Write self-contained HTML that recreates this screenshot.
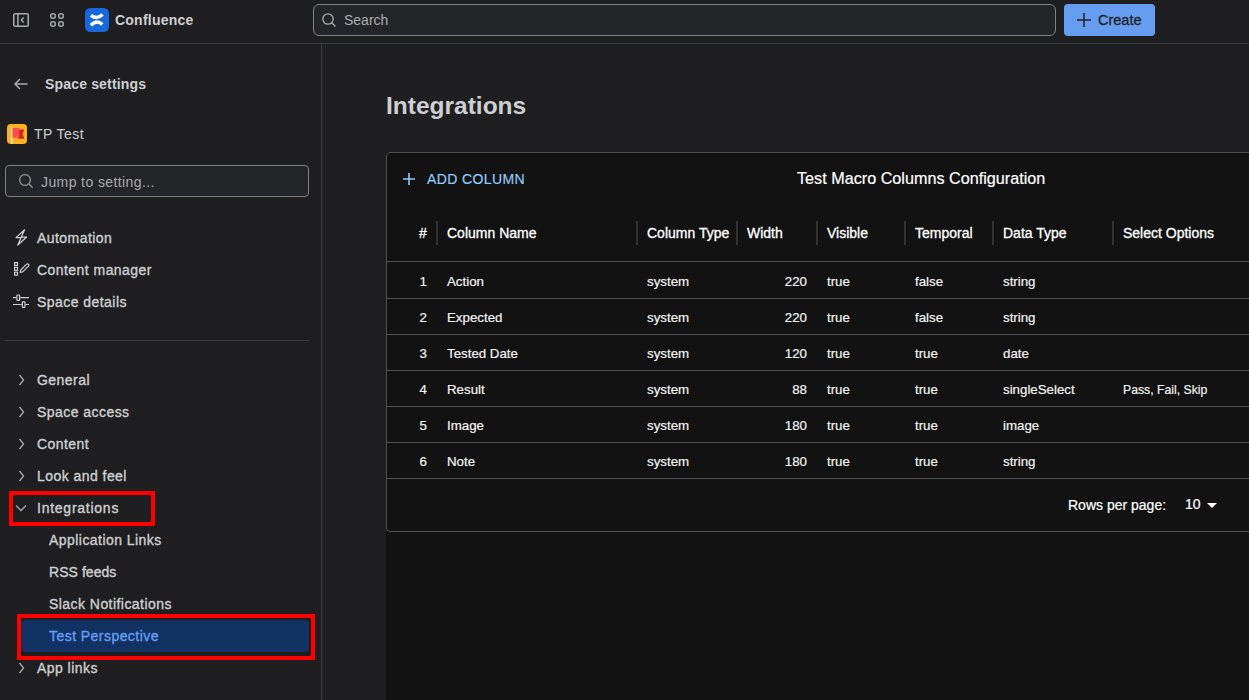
<!DOCTYPE html>
<html><head><meta charset="utf-8">
<style>
*{box-sizing:border-box;margin:0;padding:0}
html,body{width:1249px;height:700px;overflow:hidden;background:#1f1f21;font-family:"Liberation Sans",sans-serif;color:#cecfd2}
.abs{position:absolute}
.t{position:absolute;white-space:nowrap;line-height:1}
#top{position:absolute;left:0;top:0;width:1249px;height:44px;border-bottom:1px solid #3b3c3f;background:#1f1f21}
#side{position:absolute;left:0;top:44px;width:322px;height:656px;border-right:1px solid #3b3c3f;background:#1f1f21}
.navi{font-size:14px;color:#cecfd2;letter-spacing:0.45px;-webkit-text-stroke:0.35px #cecfd2}
.sub{font-size:14px;color:#cecfd2;letter-spacing:0.45px;-webkit-text-stroke:0.35px #cecfd2}
#frame{position:absolute;left:386px;top:152px;width:863px;height:548px;background:#121212}
#card{position:absolute;left:0;top:0;width:900px;height:380px;border:1px solid #515151;border-radius:4px;background:#121212}
.hd{position:absolute;top:226px;font-size:14px;color:#fff;-webkit-text-stroke:0.3px #fff;white-space:nowrap;line-height:1}
.sep{position:absolute;top:221px;width:2px;height:24px;background:#333}
.hl{position:absolute;left:387px;width:862px;height:1px;background:#515151}
.c{position:absolute;font-size:13.3px;color:#f2f2f2;-webkit-text-stroke:0.2px #f2f2f2;white-space:nowrap;line-height:1}
</style></head><body>
<div id="top">
  <!-- sidebar toggle icon -->
  <svg class="abs" style="left:13px;top:13px" width="16" height="14" viewBox="0 0 16 14"><rect x="0.75" y="0.75" width="14.5" height="12.5" rx="1.5" fill="none" stroke="#a9abaf" stroke-width="1.5"/><line x1="4.9" y1="1" x2="4.9" y2="13" stroke="#a9abaf" stroke-width="1.5"/><path d="M10.6 4.5 L8.4 7 L10.6 9.5" fill="none" stroke="#a9abaf" stroke-width="1.5"/></svg>
  <!-- app grid -->
  <svg class="abs" style="left:50px;top:13px" width="14" height="14" viewBox="0 0 14 14"><g fill="none" stroke="#a9abaf" stroke-width="1.5"><rect x="0.75" y="0.75" width="4.5" height="4.5" rx="2"/><rect x="8.75" y="0.75" width="4.5" height="4.5" rx="2"/><rect x="0.75" y="8.75" width="4.5" height="4.5" rx="2"/><rect x="8.75" y="8.75" width="4.5" height="4.5" rx="2"/></g></svg>
  <!-- confluence logo -->
  <svg class="abs" style="left:85px;top:8px" width="24" height="24" viewBox="0 0 24 24"><rect width="24" height="24" rx="5.5" fill="#1868db"/><path d="M6 7.4 Q12 12 17.6 6.6" fill="none" stroke="#fff" stroke-width="3.5"/><path d="M5.9 17.2 Q12 11.2 17.3 16.5" fill="none" stroke="#fff" stroke-width="3.5"/></svg>
  <div class="t" style="left:115px;top:13px;font-size:14px;letter-spacing:0.23px;font-weight:bold;color:#cecfd2">Confluence</div>
  <!-- search -->
  <div class="abs" style="left:313px;top:4px;width:743px;height:32px;border:1px solid #7e8188;border-radius:6px;background:#242528"></div>
  <svg class="abs" style="left:321px;top:12px" width="16" height="16" viewBox="0 0 16 16"><circle cx="7" cy="7" r="5.2" fill="none" stroke="#a9abaf" stroke-width="1.3"/><line x1="10.8" y1="10.8" x2="14.4" y2="14.4" stroke="#a9abaf" stroke-width="1.4"/></svg>
  <div class="t" style="left:344px;top:13px;font-size:14px;color:#a9abaf">Search</div>
  <!-- create -->
  <div class="abs" style="left:1064px;top:4px;width:91px;height:32px;border-radius:4px;background:#669df1"></div>
  <svg class="abs" style="left:1077px;top:13px" width="14" height="14" viewBox="0 0 14 14"><path d="M7 0 V14 M0 7 H14" stroke="#1f1f21" stroke-width="1.5"/></svg>
  <div class="t" style="left:1098px;top:13px;font-size:14.5px;color:#1f1f21;-webkit-text-stroke:0.3px #1f1f21">Create</div>
</div>

<div id="side">
  <svg class="abs" style="left:14px;top:34px" width="14" height="12" viewBox="0 0 14 12"><path d="M13.5 6 H1 M6 1 L1 6 L6 11" fill="none" stroke="#a9abaf" stroke-width="1.5"/></svg>
  <div class="t" style="left:45px;top:33px;font-size:14px;letter-spacing:0.17px;font-weight:bold;color:#cecfd2">Space settings</div>
  <!-- space avatar -->
  <svg class="abs" style="left:7px;top:80px" width="20" height="20" viewBox="0 0 20 20"><rect width="20" height="20" rx="4" fill="#ffb41f"/><rect x="4.1" y="3" width="1.3" height="16.7" fill="#e6ecef"/><path d="M10.8 5.4 H17.4 L15.6 10.1 L17.4 14.8 H10.8 Z" fill="#d92323"/><rect x="5.5" y="4" width="6.7" height="9.7" fill="#ff4d4a"/></svg>
  <div class="t" style="left:34px;top:83px;font-size:14px;letter-spacing:0.45px;color:#cecfd2">TP Test</div>
  <!-- jump input -->
  <div class="abs" style="left:5px;top:121px;width:304px;height:32px;border:1px solid #7e8188;border-radius:4px;background:#242528"></div>
  <svg class="abs" style="left:18px;top:129px" width="16" height="16" viewBox="0 0 16 16"><circle cx="7" cy="7" r="5.4" fill="none" stroke="#9a9ca1" stroke-width="1.25"/><line x1="11" y1="11" x2="14.6" y2="14.6" stroke="#9a9ca1" stroke-width="1.3"/></svg>
  <div class="t" style="left:41px;top:131px;font-size:14px;letter-spacing:0.4px;color:#a9abaf">Jump to setting...</div>

  <!-- automation -->
  <svg class="abs" style="left:15px;top:185px" width="13" height="17" viewBox="0 0 13 17"><path d="M9.6 0.8 L1 8.6 H6.2 L2.8 16 L11.6 8 H6.3 Z" fill="none" stroke="#cecfd2" stroke-width="1.25" stroke-linejoin="round"/></svg>
  <div class="t navi" style="left:37px;top:187px">Automation</div>
  <svg class="abs" style="left:13px;top:217px" width="17" height="16" viewBox="0 0 17 16"><g fill="none" stroke="#cecfd2" stroke-width="1.2"><rect x="1.6" y="1.6" width="2.9" height="2.9"/><rect x="1.6" y="6.4" width="2.9" height="2.9"/><rect x="1.6" y="11.2" width="2.9" height="2.9"/><path d="M7.2 11.5 L7.8 9 L13.6 3.2 Q14.4 2.4 15.2 3.2 L15.5 3.5 Q16.3 4.3 15.5 5.1 L9.7 10.9 Z" stroke-linejoin="round"/></g></svg>
  <div class="t navi" style="left:37px;top:219px">Content manager</div>
  <svg class="abs" style="left:13px;top:250px" width="16" height="14" viewBox="0 0 16 14"><g fill="none" stroke="#cecfd2" stroke-width="1.2"><path d="M0 3.7 H3.3 M7.2 3.7 H16 M0 10.5 H8.7 M12.6 10.5 H16"/><rect x="3.9" y="1" width="2.7" height="5.4" rx="0.6"/><rect x="9.3" y="7.9" width="2.7" height="5.4" rx="0.6"/></g></svg>
  <div class="t navi" style="left:37px;top:251px">Space details</div>

  <div class="abs" style="left:5px;top:296px;width:304px;height:1px;background:#3b3c3f"></div>

  <!-- chevrons -->
  <svg class="abs" style="left:18px;top:330px" width="8" height="12" viewBox="0 0 8 12"><path d="M1.5 1 L5.6 6 L1.5 11" fill="none" stroke="#a9abaf" stroke-width="1.3"/></svg>
  <div class="t navi" style="left:37px;top:329px">General</div>
  <svg class="abs" style="left:18px;top:362px" width="8" height="12" viewBox="0 0 8 12"><path d="M1.5 1 L5.6 6 L1.5 11" fill="none" stroke="#a9abaf" stroke-width="1.3"/></svg>
  <div class="t navi" style="left:37px;top:361px">Space access</div>
  <svg class="abs" style="left:18px;top:394px" width="8" height="12" viewBox="0 0 8 12"><path d="M1.5 1 L5.6 6 L1.5 11" fill="none" stroke="#a9abaf" stroke-width="1.3"/></svg>
  <div class="t navi" style="left:37px;top:393px">Content</div>
  <svg class="abs" style="left:18px;top:426px" width="8" height="12" viewBox="0 0 8 12"><path d="M1.5 1 L5.6 6 L1.5 11" fill="none" stroke="#a9abaf" stroke-width="1.3"/></svg>
  <div class="t navi" style="left:37px;top:425px">Look and feel</div>
  <svg class="abs" style="left:15px;top:460px" width="12" height="8" viewBox="0 0 12 8"><path d="M1 1.5 L6 6.5 L11 1.5" fill="none" stroke="#a9abaf" stroke-width="1.3"/></svg>
  <div class="t navi" style="left:37px;top:457px;letter-spacing:0.75px">Integrations</div>
  <div class="t sub" style="left:49px;top:489px">Application Links</div>
  <div class="t sub" style="left:49px;top:521px;letter-spacing:0.05px">RSS feeds</div>
  <div class="t sub" style="left:49px;top:553px">Slack Notifications</div>
  <div class="abs" style="left:21px;top:576px;width:288px;height:32px;border-radius:4px;background:#123263"></div>
  <div class="t sub" style="left:49px;top:585px;color:#669df1;-webkit-text-stroke-color:#669df1">Test Perspective</div>
  <svg class="abs" style="left:18px;top:618px" width="8" height="12" viewBox="0 0 8 12"><path d="M1.5 1 L5.6 6 L1.5 11" fill="none" stroke="#a9abaf" stroke-width="1.3"/></svg>
  <div class="t navi" style="left:37px;top:617px">App links</div>

  <!-- red boxes -->
  <div class="abs" style="left:9px;top:447px;width:146px;height:35px;border:4px solid #ff0000"></div>
  <div class="abs" style="left:17px;top:570px;width:298px;height:46px;border:4px solid #ff0000"></div>
</div>

<div class="t" style="left:386px;top:94px;font-size:24.5px;font-weight:bold;color:#cecfd2">Integrations</div>

<div id="frame">
  <div id="card"></div>
</div>
<!-- toolbar -->
<svg class="abs" style="left:403px;top:173px" width="12" height="12" viewBox="0 0 12 12"><path d="M6 0 V12 M0 6 H12" stroke="#90caf9" stroke-width="1.6"/></svg>
<div class="t" style="left:427px;top:172px;font-size:14px;color:#90caf9;letter-spacing:0.4px;-webkit-text-stroke:0.2px #90caf9">ADD COLUMN</div>
<div class="t" style="left:797px;top:170px;font-size:16.2px;color:#fff;-webkit-text-stroke:0.2px #fff">Test Macro Columns Configuration</div>

<!-- header -->
<div class="hd" style="left:419px">#</div>
<div class="sep" style="left:436px"></div>
<div class="hd" style="left:447px">Column Name</div>
<div class="sep" style="left:636px"></div>
<div class="hd" style="left:647px">Column Type</div>
<div class="sep" style="left:736px"></div>
<div class="hd" style="left:747px">Width</div>
<div class="sep" style="left:816px"></div>
<div class="hd" style="left:827px">Visible</div>
<div class="sep" style="left:904px"></div>
<div class="hd" style="left:915px">Temporal</div>
<div class="sep" style="left:992px"></div>
<div class="hd" style="left:1003px">Data Type</div>
<div class="sep" style="left:1112px"></div>
<div class="hd" style="left:1123px">Select Options</div>

<div class="hl" style="top:261px"></div>
<div class="hl" style="top:298px"></div>
<div class="hl" style="top:334px"></div>
<div class="hl" style="top:370px"></div>
<div class="hl" style="top:406px"></div>
<div class="hl" style="top:442px"></div>
<div class="hl" style="top:478px"></div>

<div id="rows">
<div class="c" style="right:822px;top:275px">1</div>
<div class="c" style="left:447px;top:275px">Action</div>
<div class="c" style="left:647px;top:275px">system</div>
<div class="c" style="right:442px;top:275px">220</div>
<div class="c" style="left:827px;top:275px">true</div>
<div class="c" style="left:915px;top:275px">false</div>
<div class="c" style="left:1003px;top:275px">string</div>
<div class="c" style="right:822px;top:311px">2</div>
<div class="c" style="left:447px;top:311px">Expected</div>
<div class="c" style="left:647px;top:311px">system</div>
<div class="c" style="right:442px;top:311px">220</div>
<div class="c" style="left:827px;top:311px">true</div>
<div class="c" style="left:915px;top:311px">false</div>
<div class="c" style="left:1003px;top:311px">string</div>
<div class="c" style="right:822px;top:347px">3</div>
<div class="c" style="left:447px;top:347px">Tested Date</div>
<div class="c" style="left:647px;top:347px">system</div>
<div class="c" style="right:442px;top:347px">120</div>
<div class="c" style="left:827px;top:347px">true</div>
<div class="c" style="left:915px;top:347px">true</div>
<div class="c" style="left:1003px;top:347px">date</div>
<div class="c" style="right:822px;top:383px">4</div>
<div class="c" style="left:447px;top:383px">Result</div>
<div class="c" style="left:647px;top:383px">system</div>
<div class="c" style="right:442px;top:383px">88</div>
<div class="c" style="left:827px;top:383px">true</div>
<div class="c" style="left:915px;top:383px">true</div>
<div class="c" style="left:1003px;top:383px">singleSelect</div>
<div class="c" style="left:1123px;top:383px"><span style="display:inline-block;transform:scaleX(0.92);transform-origin:0 0">Pass, Fail, Skip</span></div>
<div class="c" style="right:822px;top:419px">5</div>
<div class="c" style="left:447px;top:419px">Image</div>
<div class="c" style="left:647px;top:419px">system</div>
<div class="c" style="right:442px;top:419px">180</div>
<div class="c" style="left:827px;top:419px">true</div>
<div class="c" style="left:915px;top:419px">true</div>
<div class="c" style="left:1003px;top:419px">image</div>
<div class="c" style="right:822px;top:455px">6</div>
<div class="c" style="left:447px;top:455px">Note</div>
<div class="c" style="left:647px;top:455px">system</div>
<div class="c" style="right:442px;top:455px">180</div>
<div class="c" style="left:827px;top:455px">true</div>
<div class="c" style="left:915px;top:455px">true</div>
<div class="c" style="left:1003px;top:455px">string</div>
</div>

<div class="t" style="left:1068px;top:498px;font-size:14px;color:#fff;-webkit-text-stroke:0.2px #fff">Rows per page:</div>
<div class="t" style="left:1185px;top:497px;font-size:14px;color:#fff;-webkit-text-stroke:0.2px #fff">10</div>
<svg class="abs" style="left:1207px;top:503px" width="10" height="5" viewBox="0 0 10 5"><path d="M0 0 H10 L5 5 Z" fill="#fff"/></svg>
</body></html>
